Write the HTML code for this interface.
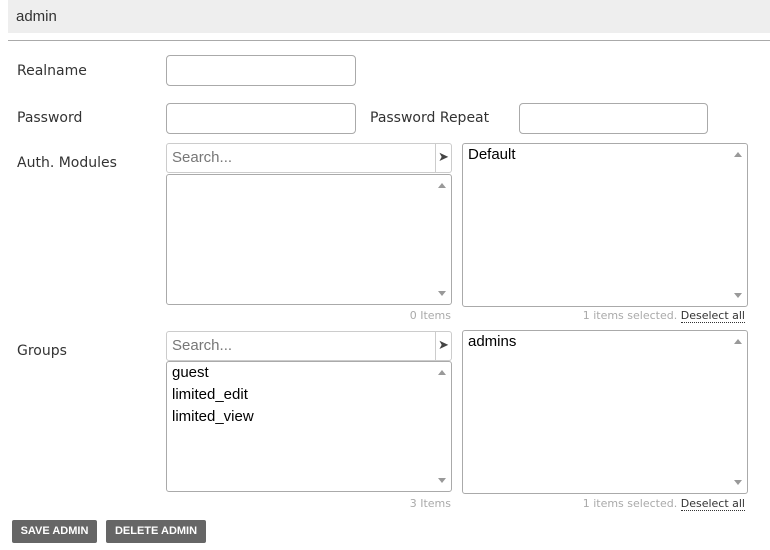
<!DOCTYPE html>
<html><head><style>
body{margin:0;width:770px;height:550px;background:#fff;font-family:"DejaVu Sans","Liberation Sans",sans-serif;color:#333;position:relative;overflow:hidden}
.a{position:absolute}
.hdr{left:8px;top:0;width:762px;height:33px;background:#eee;font-family:"Liberation Sans",sans-serif;font-size:15px;color:#333;line-height:33px;text-indent:8px}
.ln{left:8px;top:40px;width:762px;height:1px;background:#aaa}
.lbl{font-size:14px;color:#333}
.inp{border:1px solid #aaa;border-radius:4px;box-sizing:border-box;background:#fff}
.sr{border:1px solid #ccc;border-radius:3px 0 0 3px;box-sizing:border-box;font-family:"Liberation Sans",sans-serif;font-size:15px;color:#777;padding:5px 0 0 5px}
.btn{border:1px solid #ccc;border-left:none;border-radius:0 3px 3px 0;box-sizing:border-box;font-size:13px;color:#444;text-align:center;line-height:28px}
.box{border:1px solid #aaa;border-radius:3px;box-sizing:border-box;font-family:"Liberation Sans",sans-serif;font-size:15px;color:#000;padding:2px 5px}
.up,.dn{position:absolute;right:5px;width:0;height:0;border-left:4px solid transparent;border-right:4px solid transparent}
.up{border-bottom:5px solid #999;top:8px}.dn{border-top:5px solid #999;bottom:8px}
.sm{font-size:11px;color:#aaa;text-align:right}
.sm u{text-decoration:none;border-bottom:1px dotted #333;color:#333}
.b{top:520px;height:23px;background:#666;color:#fff;font-family:"Liberation Sans",sans-serif;font-weight:bold;font-size:11px;line-height:23px;text-align:center;border-radius:2px}
</style></head><body>
<div class="a hdr">admin</div>
<div class="a ln"></div>
<div class="a lbl" style="left:17px;top:63px">Realname</div>
<div class="a inp" style="left:166px;top:55px;width:190px;height:31px"></div>
<div class="a lbl" style="left:17px;top:110px">Password</div>
<div class="a inp" style="left:166px;top:103px;width:190px;height:31px"></div>
<div class="a lbl" style="left:370px;top:110px">Password Repeat</div>
<div class="a inp" style="left:519px;top:103px;width:189px;height:31px"></div>

<div class="a lbl" style="left:17px;top:155px">Auth. Modules</div>
<div class="a sr" style="left:166px;top:143px;width:270px;height:30px">Search...</div>
<div class="a btn" style="left:436px;top:143px;width:16px;height:30px">➤</div>
<div class="a box" style="left:166px;top:174px;width:286px;height:131px"><span class="up"></span><span class="dn"></span></div>
<div class="a box" style="left:462px;top:143px;width:286px;height:164px">Default<span class="up"></span><span class="dn"></span></div>
<div class="a sm" style="left:300px;top:309px;width:151px">0 Items</div>
<div class="a sm" style="left:500px;top:309px;width:245px">1 items selected. <u>Deselect all</u></div>

<div class="a lbl" style="left:17px;top:343px">Groups</div>
<div class="a sr" style="left:166px;top:331px;width:270px;height:30px">Search...</div>
<div class="a btn" style="left:436px;top:331px;width:16px;height:30px">➤</div>
<div class="a box" style="left:166px;top:361px;width:286px;height:131px;line-height:22px;padding-top:0">guest<br>limited_edit<br>limited_view<span class="up"></span><span class="dn"></span></div>
<div class="a box" style="left:462px;top:330px;width:286px;height:164px">admins<span class="up"></span><span class="dn"></span></div>
<div class="a sm" style="left:300px;top:497px;width:151px">3 Items</div>
<div class="a sm" style="left:500px;top:497px;width:245px">1 items selected. <u>Deselect all</u></div>

<div class="a b" style="left:12px;width:85px">SAVE ADMIN</div>
<div class="a b" style="left:106px;width:100px">DELETE ADMIN</div>
</body></html>
